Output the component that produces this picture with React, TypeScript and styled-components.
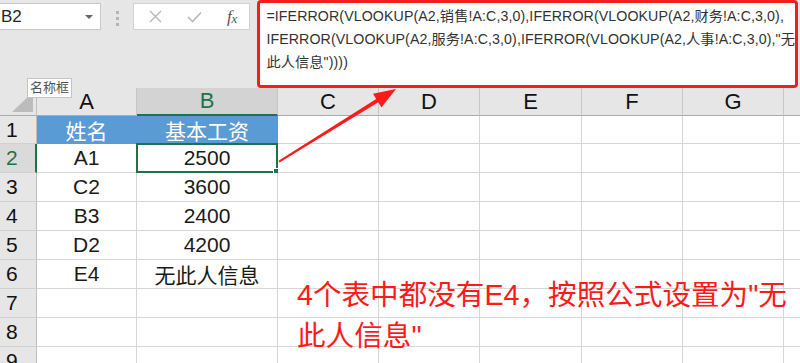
import styled, { createGlobalStyle } from "styled-components";

const GlobalStyle = createGlobalStyle`
  html, body {
    margin: 0;
    padding: 0;
    background: #fff;
  }
  body {
    font-family: "Liberation Sans", "Noto Sans CJK SC", sans-serif;
  }
`;

const Page = styled.div`
  position: relative;
  width: 800px;
  height: 363px;
  overflow: hidden;
  background: #fff;
`;

const TopBar = styled.div`
  display: flex;
  align-items: flex-start;
  width: 800px;
  height: 88px;
  background: #e6e6e6;
`;

const NameBox = styled.div`
  display: flex;
  align-items: center;
  justify-content: space-between;
  box-sizing: border-box;
  width: 103px;
  height: 27px;
  margin-top: 3px;
  padding: 0 7px 0 1px;
  background: #fff;
  border: 1px solid #c8c8c8;
  border-left: none;
  font-size: 17px;
  color: #262626;
`;

const Caret = styled.span`
  width: 0;
  height: 0;
  border-left: 4px solid transparent;
  border-right: 4px solid transparent;
  border-top: 4px solid #666;
`;

const Grip = styled.div`
  display: flex;
  flex-direction: column;
  gap: 3px;
  margin: 11px 14px 0 15px;

  span {
    width: 3px;
    height: 3px;
    background: #b4b4b4;
  }
`;

const FuncBox = styled.div`
  display: flex;
  align-items: center;
  justify-content: space-between;
  box-sizing: border-box;
  width: 119px;
  height: 27px;
  margin-top: 3px;
  padding: 0 12px 0 15px;
  background: #fff;
  border: 1px solid #d2d2d2;
`;

const Fx = styled.span`
  font-family: "Liberation Serif", "DejaVu Serif", serif;
  font-style: italic;
  font-size: 17px;
  color: #555;

  sub {
    font-size: 13px;
    vertical-align: -1px;
  }
`;

const FormulaBar = styled.div`
  box-sizing: border-box;
  flex: 1;
  height: 88px;
  margin: 0 2px 0 7px;
  padding: 2px 0 0 6px;
  background: #fff;
  border: 3px solid #f01e1e;
  border-radius: 4px;
  font-size: 14.2px;
  letter-spacing: 0.1px;
  line-height: 23px;
  color: #333;
`;

const FormulaLine = styled.div`
  white-space: nowrap;
`;

const Sheet = styled.div`
  display: grid;
  width: max-content;
  grid-template-columns: 37px 100px 141px 101px 101px 102px 101px 101px 101px;
  grid-template-rows: 28px 28px repeat(8, 29px);
`;

const Corner = styled.div`
  position: relative;
  background: #e6e6e6;
  border-right: 1px solid #bfbfbf;
  border-bottom: 1px solid #ababab;

  &::after {
    content: "";
    position: absolute;
    right: 3px;
    bottom: 3px;
    width: 0;
    height: 0;
    border-left: 21px solid transparent;
    border-bottom: 20px solid #bcbcbc;
  }
`;

const ColHead = styled.div<{ $active?: boolean }>`
  display: flex;
  align-items: center;
  justify-content: center;
  box-sizing: border-box;
  background: ${(p) => (p.$active ? "#d3d3d3" : "#e6e6e6")};
  border-right: 1px solid #c6c6c6;
  border-bottom: ${(p) => (p.$active ? "2px solid #217346" : "1px solid #ababab")};
  font-size: 22px;
  color: ${(p) => (p.$active ? "#217346" : "#111")};
`;

const RowHead = styled.div<{ $active?: boolean }>`
  display: flex;
  align-items: center;
  box-sizing: border-box;
  padding-left: 6px;
  background: ${(p) => (p.$active ? "#dadada" : "#e6e6e6")};
  border-right: ${(p) => (p.$active ? "2px solid #217346" : "1px solid #bfbfbf")};
  border-bottom: 1px solid #d0d0d0;
  font-size: 21px;
  color: ${(p) => (p.$active ? "#217346" : "#111")};
`;

const Cell = styled.div<{ $blue?: boolean }>`
  position: relative;
  display: flex;
  align-items: center;
  justify-content: center;
  box-sizing: border-box;
  background: ${(p) => (p.$blue ? "#5b9bd5" : "#fff")};
  border-right: 1px solid ${(p) => (p.$blue ? "#5b9bd5" : "#d6d6d6")};
  border-bottom: 1px solid ${(p) => (p.$blue ? "#5b9bd5" : "#d6d6d6")};
  font-size: 21px;
  color: ${(p) => (p.$blue ? "#fff" : "#1a1a1a")};
`;

const Selection = styled.div`
  position: absolute;
  inset: -1px -1px -1px -1px;
  border: 2px solid #217346;
  pointer-events: none;
`;

const FillHandle = styled.div`
  position: absolute;
  right: -4px;
  bottom: -4px;
  width: 5px;
  height: 5px;
  background: #217346;
  border: 1px solid #fff;
`;

const Tooltip = styled.div`
  position: absolute;
  left: 27px;
  top: 78px;
  box-sizing: border-box;
  height: 20px;
  padding: 0 2px;
  background: #fff;
  border: 1px solid #c4c4c4;
  font-size: 13px;
  line-height: 18px;
  color: #555;
`;

const Arrow = styled.svg`
  position: absolute;
  left: 270px;
  top: 80px;
`;

const Note = styled.div`
  position: absolute;
  left: 297px;
  top: 275px;
  font-size: 28.6px;
  line-height: 41px;
  color: #ff1a1a;
  white-space: nowrap;
`;

const columns = ["A", "B", "C", "D", "E", "F", "G", "H"];

const rows: [string, string][] = [
  ["姓名", "基本工资"],
  ["A1", "2500"],
  ["C2", "3600"],
  ["B3", "2400"],
  ["D2", "4200"],
  ["E4", "无此人信息"],
  ["", ""],
  ["", ""],
  ["", ""],
];

function App() {
  return (
    <Page>
      <GlobalStyle />
      <TopBar>
        <NameBox>
          B2
          <Caret />
        </NameBox>
        <Grip>
          <span />
          <span />
          <span />
        </Grip>
        <FuncBox>
          <svg width="13" height="13" viewBox="0 0 13 13">
            <path d="M1 1 L12 12 M12 1 L1 12" stroke="#b8b8b8" strokeWidth="1.4" />
          </svg>
          <svg width="15" height="12" viewBox="0 0 15 12">
            <path d="M1 6 L5.5 10.5 L14 1.5" stroke="#b8b8b8" strokeWidth="1.6" fill="none" />
          </svg>
          <Fx>
            f<sub>x</sub>
          </Fx>
        </FuncBox>
        <FormulaBar>
          <FormulaLine>=IFERROR(VLOOKUP(A2,销售!A:C,3,0),IFERROR(VLOOKUP(A2,财务!A:C,3,0),</FormulaLine>
          <FormulaLine>IFERROR(VLOOKUP(A2,服务!A:C,3,0),IFERROR(VLOOKUP(A2,人事!A:C,3,0),"无</FormulaLine>
          <FormulaLine>此人信息"))))</FormulaLine>
        </FormulaBar>
      </TopBar>

      <Sheet>
        <Corner />
        {columns.map((c) => (
          <ColHead key={c} $active={c === "B"}>
            {c}
          </ColHead>
        ))}
        {rows.map(([a, b], i) => (
          <Row key={i} index={i + 1} a={a} b={b} />
        ))}
      </Sheet>

      <Tooltip>名称框</Tooltip>

      <Arrow width="140" height="90" viewBox="0 0 140 90">
        <polygon
          points="8.5,80.8 106.2,18.9 103,13.8 126,9 111.4,27.4 108.3,22.3 9.5,82.4"
          fill="#ff1a1a"
        />
      </Arrow>

      <Note>
        4个表中都没有E4，按照公式设置为"无
        <br />
        此人信息"
      </Note>
    </Page>
  );
}

function Row({ index, a, b }: { index: number; a: string; b: string }) {
  const blue = index === 1;
  return (
    <>
      <RowHead $active={index === 2}>{index}</RowHead>
      <Cell $blue={blue}>{a}</Cell>
      <Cell $blue={blue}>
        {b}
        {index === 2 && (
          <Selection>
            <FillHandle />
          </Selection>
        )}
      </Cell>
      {columns.slice(2).map((c) => (
        <Cell key={c} />
      ))}
    </>
  );
}

export default App;
